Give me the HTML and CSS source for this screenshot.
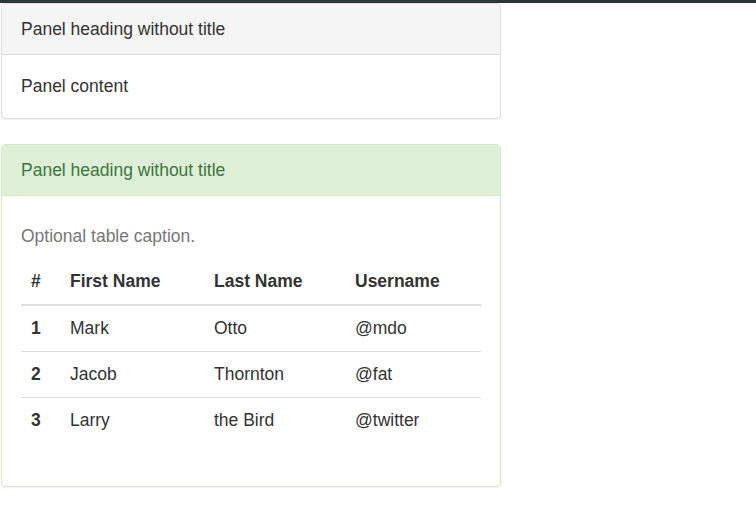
FILE: index.html
```html
<!DOCTYPE html>
<html>
<head>
<meta charset="utf-8">
<link rel="stylesheet" href="styles.css">
</head>
<body>
<div class="topbar"></div>
<div class="page">
  <div class="panel panel-default">
    <div class="panel-heading">Panel heading without title</div>
    <div class="panel-body">Panel content</div>
  </div>
  <div class="panel panel-success">
    <div class="panel-heading">Panel heading without title</div>
    <div class="panel-body table-body">
      <table class="table">
        <caption>Optional table caption.</caption>
        <colgroup>
          <col class="c1"><col class="c2"><col class="c3"><col class="c4">
        </colgroup>
        <thead>
          <tr><th>#</th><th>First Name</th><th>Last Name</th><th>Username</th></tr>
        </thead>
        <tbody>
          <tr><th>1</th><td>Mark</td><td>Otto</td><td>@mdo</td></tr>
          <tr><th>2</th><td>Jacob</td><td>Thornton</td><td>@fat</td></tr>
          <tr><th>3</th><td>Larry</td><td>the Bird</td><td>@twitter</td></tr>
        </tbody>
      </table>
    </div>
  </div>
</div>
</body>
</html>
```

FILE: styles.css
```css
html, body {
  margin: 0;
  padding: 0;
  background: #fff;
}
body {
  font-family: "Liberation Sans", Arial, sans-serif;
  font-size: 17.5px;
  line-height: 25px;
  color: #333;
}
.topbar {
  height: 3px;
  background: #2d3436;
}
.page {
  padding-left: 1px;
}
.panel {
  box-sizing: border-box;
  width: 500px;
  border: 1px solid #ddd;
  border-radius: 4px;
  box-shadow: 0 1px 1px rgba(0, 0, 0, 0.05);
  background: #fff;
  margin-bottom: 25px;
}
.panel-heading {
  padding: 12.5px 19px;
  border-bottom: 1px solid #ddd;
  border-radius: 3px 3px 0 0;
}
.panel-default .panel-heading {
  background: #f5f5f5;
  color: #333;
}
.panel-success {
  border-color: #d6e9c6;
}
.panel-success .panel-heading {
  background: #dff0d8;
  color: #3c763d;
  border-bottom-color: #d6e9c6;
}
.panel-body {
  padding: 18.5px 19px 19.5px;
}
.table-body {
  padding: 19px 19px 19px;
}
.table {
  width: 100%;
  border-collapse: collapse;
  border-spacing: 0;
  margin-bottom: 24px;
}
.table caption {
  text-align: left;
  color: #777;
  padding: 8.5px 0 9px;
}
.c1 { width: 39px; }
.c2 { width: 144px; }
.c3 { width: 141px; }
.table th, .table td {
  text-align: left;
  padding: 10px;
  vertical-align: top;
}
.table thead th {
  padding: 11px 10px 10.5px;
  border-bottom: 2px solid #ddd;
  font-weight: bold;
}
.table tbody th {
  font-weight: bold;
}
.table tbody tr + tr th,
.table tbody tr + tr td {
  border-top: 1px solid #ddd;
}
```
